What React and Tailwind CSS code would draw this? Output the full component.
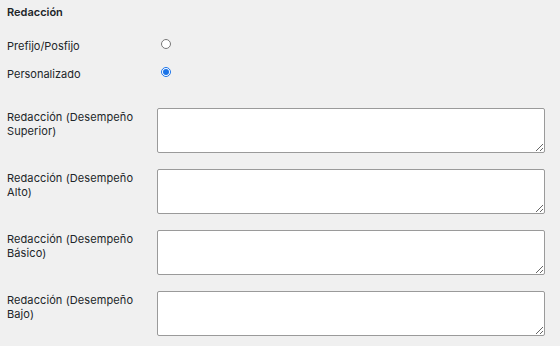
import { useState } from 'react'

const levels = ['Superior', 'Alto', 'Básico', 'Bajo']

export default function App() {
  const [mode, setMode] = useState('custom')

  return (
    <div
      className="w-[560px] h-[346px] overflow-hidden bg-[#f0f0f0] text-[#212529] px-[7px]"
      style={{ fontFamily: 'Inter, "Noto Sans", sans-serif' }}
    >
      <div className="pt-[5px] h-[30px] text-[11px] leading-[15px] font-semibold">Redacción</div>

      <div className="flex flex-col">
        <label className="flex items-center h-[28px]">
          <span className="w-[150px] text-[11px] leading-[14px] pt-[3px]">Prefijo/Posfijo</span>
          <input
            type="radio"
            name="mode"
            checked={mode === 'prefix'}
            onChange={() => setMode('prefix')}
            className="ml-[4px] w-[10px] h-[10px] m-0 accent-[#1a73e8]"
          />
        </label>
        <label className="flex items-center h-[28px]">
          <span className="w-[150px] text-[11px] leading-[14px] pt-[3px]">Personalizado</span>
          <input
            type="radio"
            name="mode"
            checked={mode === 'custom'}
            onChange={() => setMode('custom')}
            className="ml-[4px] w-[10px] h-[10px] m-0 accent-[#1a73e8]"
          />
        </label>
      </div>

      <div className="flex flex-col gap-[16px] mt-[22px]">
        {levels.map((level) => (
          <div key={level} className="flex items-start">
            <div className="w-[150px] pt-[2px] pr-[10px] text-[11px] leading-[14px] tracking-[0.1px]">
              Redacción (Desempeño {level})
            </div>
            <textarea className="w-[388px] h-[45px] bg-white border border-[#9a9a9a] rounded-[2px] outline-none" />
          </div>
        ))}
      </div>
    </div>
  )
}
